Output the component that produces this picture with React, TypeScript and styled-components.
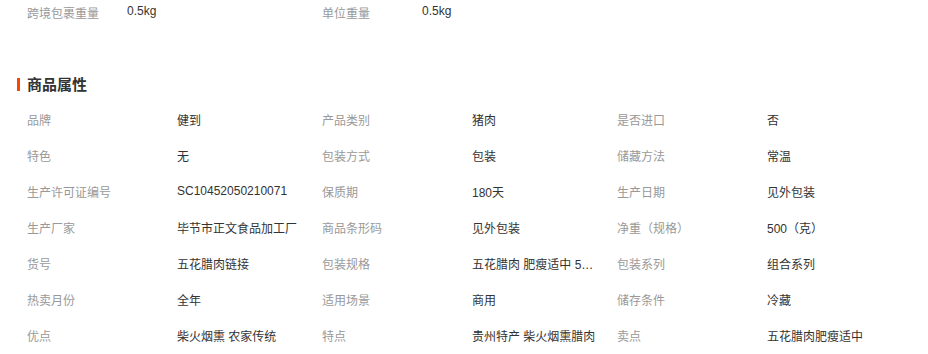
import React from 'react'
import styled, { createGlobalStyle } from 'styled-components'

const GlobalStyle = createGlobalStyle`
  body {
    margin: 0;
    background: #fff;
    font-family: "Liberation Sans", "Noto Sans CJK SC", sans-serif;
    font-size: 12px;
    color: #333;
  }
`

const Page = styled.div`
  width: 928px;
  height: 354px;
  overflow: hidden;
`

const TopRow = styled.div`
  display: flex;
  padding-left: 27px;
  height: 25px;
  align-items: center;
`

const TopItem = styled.div`
  display: flex;
  width: 295px;
`

const TopLabel = styled.span`
  width: 100px;
  color: #999;
`

const Value = styled.span`
  color: #333;
`

const SectionTitle = styled.h3`
  display: flex;
  align-items: center;
  margin: 45px 0 5px 17px;
  height: 26px;
  font-size: 15px;
  font-weight: bold;
  color: #333;

  &::before {
    content: '';
    width: 3px;
    height: 13px;
    background: #ff4400;
    margin-right: 7px;
    margin-top: 2px;
  }
`

const Grid = styled.div`
  display: grid;
  grid-template-columns: repeat(3, 295px);
  grid-auto-rows: 36px;
  padding-left: 27px;
`

const Cell = styled.div`
  display: flex;
  align-items: center;
`

const Label = styled.span`
  width: 150px;
  flex-shrink: 0;
  color: #999;
`

const CellValue = styled.span`
  width: 128px;
  color: #333;
  white-space: nowrap;
  overflow: hidden;
  text-overflow: ellipsis;
`

const attrs: [string, string][] = [
  ['品牌', '健到'],
  ['产品类别', '猪肉'],
  ['是否进口', '否'],
  ['特色', '无'],
  ['包装方式', '包装'],
  ['储藏方法', '常温'],
  ['生产许可证编号', 'SC10452050210071'],
  ['保质期', '180天'],
  ['生产日期', '见外包装'],
  ['生产厂家', '毕节市正文食品加工厂'],
  ['商品条形码', '见外包装'],
  ['净重（规格）', '500（克）'],
  ['货号', '五花腊肉链接'],
  ['包装规格', '五花腊肉 肥瘦适中 500克'],
  ['包装系列', '组合系列'],
  ['热卖月份', '全年'],
  ['适用场景', '商用'],
  ['储存条件', '冷藏'],
  ['优点', '柴火烟熏 农家传统'],
  ['特点', '贵州特产 柴火烟熏腊肉'],
  ['卖点', '五花腊肉肥瘦适中'],
]

export default function App() {
  return (
    <Page>
      <GlobalStyle />
      <TopRow>
        <TopItem>
          <TopLabel>跨境包裹重量</TopLabel>
          <Value>0.5kg</Value>
        </TopItem>
        <TopItem>
          <TopLabel>单位重量</TopLabel>
          <Value>0.5kg</Value>
        </TopItem>
      </TopRow>
      <SectionTitle>商品属性</SectionTitle>
      <Grid>
        {attrs.map(([k, v]) => (
          <Cell key={k}>
            <Label>{k}</Label>
            <CellValue>{v}</CellValue>
          </Cell>
        ))}
      </Grid>
    </Page>
  )
}
